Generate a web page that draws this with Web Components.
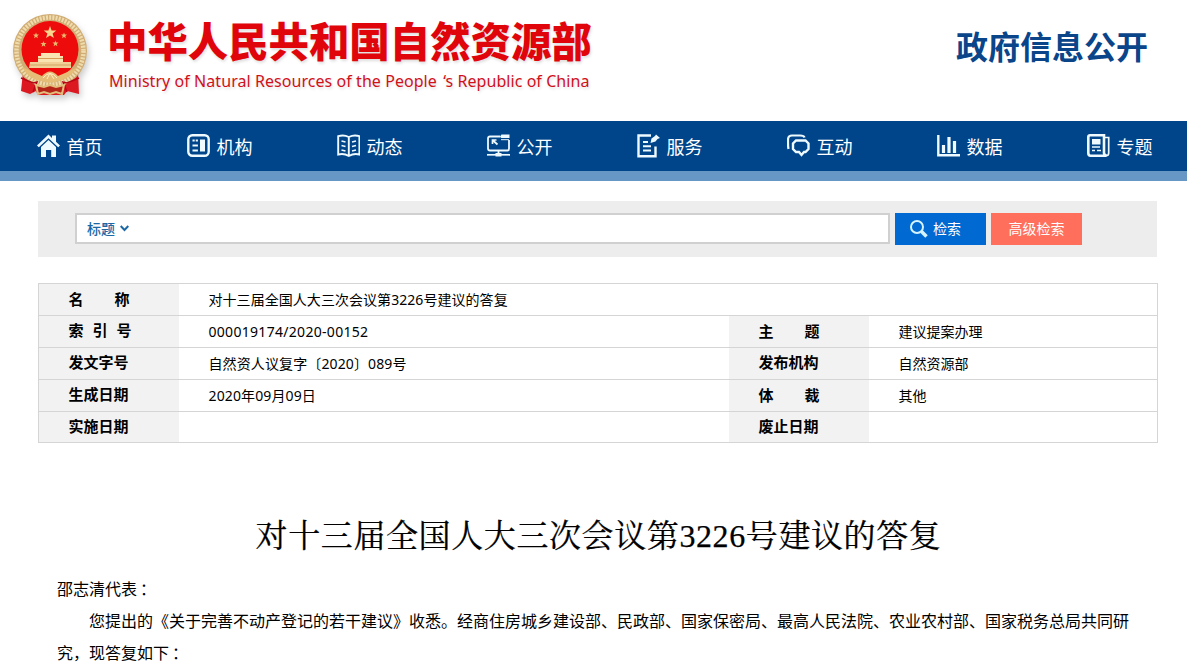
<!DOCTYPE html>
<html lang="zh-CN">
<head>
<meta charset="utf-8">
<title>对十三届全国人大三次会议第3226号建议的答复</title>
<style>
body{margin:0;background:#fff;color:#000;font-family:"Noto Sans","Noto Sans CJK SC",sans-serif;overflow:hidden}
</style>
</head>
<body>
<mnr-page></mnr-page>
<script>
const define=(name,css,html)=>customElements.define(name,class extends HTMLElement{
  constructor(){super();
    const t=document.createElement('template');
    t.innerHTML=`<style>*{box-sizing:border-box}${css}</style>${typeof html==='function'?html(this):html}`;
    this.attachShadow({mode:'open'}).append(t.content.cloneNode(true));
  }
});

const icons={
home:'<path fill="currentColor" stroke="none" d="M11.500 0.500L15 4V1.500H19V7.700L23 11.500L21.200 13.300L11.500 4.200L1.800 13.300L0 11.500Z"/><path fill="currentColor" stroke="none" d="M11.500 6L19 13V23H14.200V16H9V23H4V13Z"/>',
org:'<rect x="1.300" y="1.300" width="20.400" height="20.400" rx="4"/><path d="M5.500 6.500h2.200M8.700 6.500h2.200M5.500 11.500h5.400M5.500 16.500h5.400" stroke-width="2.200"/><path d="M13 5.500h5v12h-5z" fill="currentColor" stroke="none"/>',
book:'<path d="M1.200 2.200Q7 .5 11.800 3Q17 .5 22.400 2.200V20.500Q17 19 11.800 22Q7 19 1.200 20.500ZM11.800 3V22" stroke-width="1.900"/><path d="M4.500 7l4 1M4.500 11.500l4 1M4.500 16l4 1M15 8l4-1M15 12.500l4-1M15 17l4-1" stroke-width="1.600"/>',
open:'<path d="M13 2.500H3Q1 2.500 1 4.500V14.500Q1 16.500 3 16.500H20.500Q22 16.500 22 14.500V6M11.500 16.500V20" stroke-width="1.800"/><path d="M13 2.500L14.500 .5H22.500V4H14Z" fill="currentColor" stroke="none"/><path d="M14 5.700h8" stroke-width="1"/><path d="M5.500 10V6H9.500M6 6.500L10.500 10.500" stroke-width="1.700"/><path d="M0 20.800h23" stroke-width="1.700"/><path d="M8.500 19h6v3.500h-6z" fill="currentColor" stroke="none"/>',
service:'<path d="M14 1.500H1.500V22.300H18.500V12.500"/><path d="M6 8h5M6 12.300h8M6 16.600h8" stroke-width="2"/><path d="M13.500 9L14.500 4.500L18 2L19 .5L23 4L20.500 5L18.500 7.500Z" fill="currentColor" stroke="none"/>',
chat:'<path d="M1.500 15Q1 13 1 9V6Q1 1.500 5 1.500H13Q17 1.500 17.500 3.500" stroke-width="2.200"/><path d="M9 6.500H18.500L21.500 9.500V15L18.500 18H17L14.500 21L12 18H9L6 15V9.500Z" stroke-width="2.400"/>',
chart:'<path d="M1.300 1V21.300H23"/><path d="M6.500 11v8M12 3v16M17.500 7v12" stroke-width="3.200"/>',
news:'<path d="M17 1.300H3Q1.300 1.300 1.300 3V19Q1.300 21.700 3.500 21.700H19.500Q17 21 17 19Z" stroke-width="2.600"/><path d="M17.500 3.500H21.700V19Q21.700 21.700 19 21.700" stroke-width="1.700"/><path d="M5 5h8.500v5.500H5z" fill="currentColor" stroke="none"/><path d="M5 13h8M5 16.500h3M10 16.500h4" stroke-width="1.600"/>'
};

define('state-emblem',':host{display:block;width:86px;height:94px;filter:drop-shadow(2px 4px 3px #0003)}svg{display:block}',
`<svg width="86" height="94" viewBox="8 8 86 94">
<path d="M23 72L21 91L30 94L36 91L38 95H64L67 91L79 94L78 72L68 70H34Z" fill="#dc1820"/>
<circle cx="50" cy="51" r="37" fill="#d0ad74"/>
<circle cx="50" cy="51" r="33.500" fill="none" stroke="#efdbac" stroke-width="4.500" stroke-dasharray="2 1.200"/>
<circle cx="50" cy="49.500" r="28.500" fill="#ee0b0b"/>
<path d="M50 26l1.600 4.500 4.700.1-3.700 2.900 1.300 4.600L50 35.400l-3.900 2.700 1.300-4.600-3.700-2.900 4.700-.1z" fill="#f9d58d"/>
<path id="s" d="M36 32.500l.8 2 2.200.1-1.700 1.400.6 2.200-1.900-1.200-1.900 1.200.6-2.200-1.700-1.400 2.200-.1z" fill="#eab76c"/>
<use href="#s" x="28"/><use href="#s" x="7.500" y="8.500"/><use href="#s" x="19.500" y="8"/>
<path d="M41 53H60V56H63V62H38V56H41Z" fill="#f9e3b2"/><path d="M38 58.500h25" stroke="#d89a57"/>
<path d="M30 62H71V68H29Z" fill="#efcf96"/><path d="M30 65h41" stroke="#c98f50" stroke-width=".7"/>
<path d="M22 67Q35 73 42 76Q50 67 58 76Q68 72 78 67Q68 80 58 81Q50 84 42 81Q29 80 22 67Z" fill="#e5bd76"/>
<path d="M43 78q7-9 14 0M47 79l3-6 4 6" fill="none" stroke="#fff0c7"/>
<path d="M21 78l12 5 4-1-4 10M79 78l-12 5-4-1 4 10" fill="none" stroke="#b80616" stroke-width="1.500"/>
<path d="M36 85L44 87L50 85L56 87L64 85L62 94L56 92L50 94L44 92L38 94Z" fill="#b42417" stroke="#e2bd7b" stroke-width="2"/>
</svg>`);

define('site-header',`
:host{display:flex;height:121px;padding:8px 38px 0 8px}
.brand{margin-left:13px;color:#df0713;white-space:nowrap}
h1{margin:6px 0 0;font:900 40.400px/52px "Noto Sans CJK SC",sans-serif;text-shadow:1px 2px 3px #0002;color:#e0040b}
p{margin:3px 0 0 2px;font:16px/24px "Noto Sans",sans-serif;letter-spacing:.06px;color:#d0101a;text-shadow:1px 2px 3px #0002}
p span{margin-left:2px}
.name{margin:12px 1px 0 auto;font:bold 32px/50px "Noto Sans CJK SC",sans-serif;color:#0a458a;white-space:nowrap}`,
`<state-emblem></state-emblem><div class="brand"><h1>中华人民共和国自然资源部</h1><p>Ministry of Natural Resources of the People <span>‘s</span> Republic of China</p></div><div class="name">政府信息公开</div>`);

define('nav-item',`
:host{display:flex;align-items:center;gap:6.500px;width:150px;height:50px;color:#fff;font-size:18px;white-space:nowrap}
svg{display:block;width:23px;height:24px;color:#eefaff;fill:none;stroke:currentColor;stroke-width:2.400}`,
el=>`<svg viewBox="0 0 23 24">${icons[el.getAttribute('icon')]}</svg><slot></slot>`);

define('site-nav',':host{display:flex;height:60px;padding-left:37px;background:#004489;border-bottom:10px solid #6797c4;overflow:hidden}nav-item{flex:none}',
[['home','首页'],['org','机构'],['book','动态'],['open','公开'],['service','服务'],['chat','互动'],['chart','数据'],['news','专题']].map(([i,t])=>`<nav-item icon="${i}">${t}</nav-item>`).join(''));

define('search-bar',`
:host{display:flex;align-items:center;height:56px;margin:20px 30px 0 38px;padding:0 0 1px 37px;background:#ededed;font-size:14px}
.field{display:flex;align-items:center;gap:5px;width:815px;height:31px;padding:0 0 1px 10px;border:2px solid #d0d0d0;background:#fff;color:#1b68a5;font-weight:500}
.btn{display:flex;align-items:center;justify-content:center;gap:5px;width:91px;height:32px;margin-left:5px;background:#0069d2;color:#fff;padding-bottom:1px}
.btn.find{justify-content:flex-start;padding-left:15px}
.btn.adv{background:#ff6f5b}
svg{fill:none;stroke:currentColor}
.find svg{margin-top:2px}`,
`<div class="field">标题<svg width="9" height="7" viewBox="0 0 9 7" stroke-width="2"><path d="M.7 1L4.500 5L8.300 1"/></svg></div>
<div class="btn find"><svg width="18" height="18" viewBox="0 0 18 18" color="#d5f4ff"><circle cx="7" cy="7" r="6" stroke-width="2"/><path d="M11.500 11.500L16.500 16.500" stroke-width="3.500"/></svg>检索</div><div class="btn adv">高级检索</div>`);

define('meta-label',`
:host{display:block;padding-left:29.500px;background:#f2f2f2;font:bold 15px/29px "Noto Sans CJK SC",sans-serif;white-space:pre}
div{display:flex;justify-content:space-between;width:var(--w,60px)}`,
el=>`<div>${[...el.getAttribute('text')].map(c=>`<span>${c}</span>`).join('')}</div>`);
define('meta-value',':host{display:block;padding-left:29.500px;font-size:14px;line-height:32px;white-space:nowrap}','<slot></slot>');

define('meta-table',`
:host{display:grid;grid-template-columns:140px 550px 140px 1fr;grid-template-rows:32px 32px 32px 32px 31px;margin:26px 29px 0 38px;border:1px solid #d5d5d5;border-top:0;height:160px}
:host>*{border-top:1px solid #d5d5d5}
.wide{grid-column:span 3;letter-spacing:.05px}
.num{letter-spacing:.3px}.date{letter-spacing:.12px}`,
`<meta-label text="名称" style="--w:61px"></meta-label><meta-value class="wide">对十三届全国人大三次会议第3226号建议的答复</meta-value>
<meta-label text="索引号" style="--w:63px;line-height:28px"></meta-label><meta-value class="num">000019174/2020-00152</meta-value><meta-label text="主题" style="--w:61px"></meta-label><meta-value>建议提案办理</meta-value>
<meta-label text="发文字号" style="line-height:28px"></meta-label><meta-value class="date">自然资人议复字〔2020〕089号</meta-value><meta-label text="发布机构" style="line-height:28px"></meta-label><meta-value>自然资源部</meta-value>
<meta-label text="生成日期" style="line-height:28px"></meta-label><meta-value class="date">2020年09月09日</meta-value><meta-label text="体裁" style="--w:61px"></meta-label><meta-value>其他</meta-value>
<meta-label text="实施日期" style="line-height:28px"></meta-label><meta-value></meta-value><meta-label text="废止日期" style="line-height:28px"></meta-label><meta-value></meta-value>`);

define('reply-article',`
:host{display:block;padding:69px 57px 0}
h2{margin:0 0 13px 10px;font:400 32px/48px "Liberation Serif","Noto Serif CJK SC","Noto Sans CJK SC",serif;letter-spacing:.6px;text-align:center;white-space:nowrap;-webkit-text-stroke:.25px #000}
p{margin:0;font-size:16px;line-height:32px;white-space:nowrap}
.in{padding-left:32px}
.colon{margin-left:3px}`,
`<h2>对十三届全国人大三次会议第3226号建议的答复</h2><p>邵志清代表<span class="colon">：</span></p>
<p class="in">您提出的《关于完善不动产登记的若干建议》收悉。经商住房城乡建设部、民政部、国家保密局、最高人民法院、农业农村部、国家税务总局共同研</p><p>究，现答复如下<span class="colon">：</span></p>`);

define('mnr-page',':host{display:block;width:1187px;height:670px;overflow:hidden}','<site-header></site-header><site-nav></site-nav><search-bar></search-bar><meta-table></meta-table><reply-article></reply-article>');
</script>
</body>
</html>
